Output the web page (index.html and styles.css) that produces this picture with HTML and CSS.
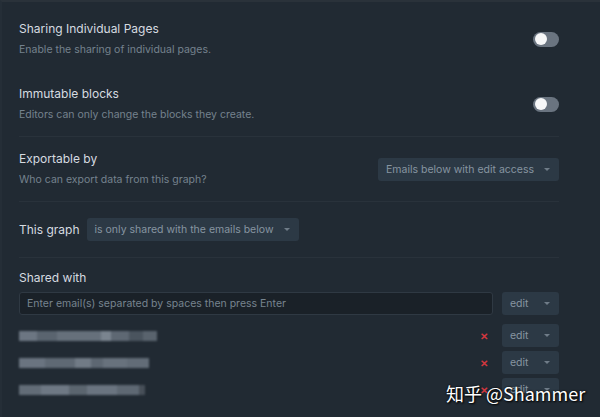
FILE: index.html
```html
<!DOCTYPE html>
<html>
<head>
<meta charset="utf-8">
<link rel="stylesheet" href="styles.css">
</head>
<body>
<div class="panel">
  <div class="row first">
    <div class="text">
      <div class="title">Sharing Individual Pages</div>
      <div class="sub">Enable the sharing of individual pages.</div>
    </div>
    <div class="toggle"><span class="knob"></span></div>
  </div>
  <div class="row">
    <div class="text">
      <div class="title">Immutable blocks</div>
      <div class="sub">Editors can only change the blocks they create.</div>
    </div>
    <div class="toggle"><span class="knob"></span></div>
  </div>
  <div class="row">
    <div class="text">
      <div class="title">Exportable by</div>
      <div class="sub">Who can export data from this graph?</div>
    </div>
    <div class="select wide">Emails below with edit access<span class="caret"></span></div>
  </div>
  <div class="row graph">
    <div class="title">This graph</div>
    <div class="select">is only shared with the emails below<span class="caret"></span></div>
  </div>
  <div class="shared">
    <div class="title">Shared with</div>
    <div class="line">
      <div class="input">Enter email(s) separated by spaces then press Enter</div>
      <div class="select edit">edit<span class="caret"></span></div>
    </div>
    <div class="line">
      <div class="email">
        <i style="width:18px;background:#6c7682"></i><i style="width:20px;background:#5a646f"></i><i style="width:44px;background:#66707b"></i><i style="width:10px;background:#7a848f"></i><i style="width:18px;background:#5e6873"></i><i style="width:14px;background:#4a545e"></i><i style="width:14px;background:#59636d"></i>
      </div>
      <span class="x">✕</span>
      <div class="select edit">edit<span class="caret"></span></div>
    </div>
    <div class="line">
      <div class="email">
        <i style="width:26px;background:#6a7480"></i><i style="width:30px;background:#5f6974"></i><i style="width:16px;background:#717b86"></i><i style="width:12px;background:#5d6772"></i><i style="width:24px;background:#68727d"></i><i style="width:22px;background:#626c77"></i>
      </div>
      <span class="x">✕</span>
      <div class="select edit">edit<span class="caret"></span></div>
    </div>
    <div class="line">
      <div class="email">
        <i style="width:22px;background:#626c77"></i><i style="width:28px;background:#6e7884"></i><i style="width:18px;background:#5b656f"></i><i style="width:30px;background:#6a7480"></i><i style="width:22px;background:#5e6873"></i><i style="width:6px;background:#474f58"></i>
      </div>
      <span class="x">✕</span>
      <div class="select edit">edit<span class="caret"></span></div>
    </div>
  </div>
  <div class="watermark">知乎 @Shammer</div>
</div>
</body>
</html>
```
FILE: styles.css
```css
* { box-sizing: border-box; }
html, body { margin: 0; padding: 0; }
body {
  width: 600px;
  height: 417px;
  overflow: hidden;
  background: #212a33;
  font-family: Inter, "Noto Sans", sans-serif;
}
.panel {
  position: relative;
  height: 417px;
  padding: 7px 41px 0 19px;
  border-top: 2px solid #2a323a;
  border-left: 2px solid #252e37;
}
.row {
  display: flex;
  align-items: center;
  justify-content: space-between;
  padding: 14px 0;
  border-bottom: 1px solid #29323b;
  height: 65px;
}
.row.first { margin-top: -2px; margin-left: -2px; border-bottom-color: transparent; }
.row:not(.first), .shared { margin-left: -2px; }
.text { display: flex; flex-direction: column; gap: 5px; }
.title {
  color: #d6dbe0;
  font-size: 12px;
  line-height: 16px;
}
.sub {
  color: #75828e;
  font-size: 10.5px;
  line-height: 16px;
}
.toggle {
  width: 26px;
  height: 15px;
  border-radius: 8px;
  background: #6a7480;
  padding: 1.5px;
  display: flex;
  align-items: center;
}
.knob {
  width: 12px;
  height: 12px;
  border-radius: 50%;
  background: #f6f7f8;
}
.select {
  display: flex;
  align-items: center;
  justify-content: space-between;
  height: 23px;
  padding: 0 9px 0 8px;
  background: #2c3945;
  border-radius: 3px;
  color: #8795a1;
  font-size: 10.5px;
  white-space: nowrap;
}
.select.wide { width: 181px; }
.caret {
  width: 0; height: 0;
  border-left: 3.5px solid transparent;
  border-right: 3.5px solid transparent;
  border-top: 3.5px solid #6f7c88;
  margin-left: 8px;
}
.row.graph {
  height: 56px;
  justify-content: flex-start;
  gap: 7px;
}
.row.graph .select { width: 212px; }
.shared {
  padding-top: 12px;
  display: flex;
  flex-direction: column;
}
.shared .title { margin-bottom: 6px; }
.line {
  display: flex;
  align-items: center;
  height: 23px;
  margin-bottom: 4px;
}
.line:nth-child(2) { margin-bottom: 9px; }
.input {
  flex: 1;
  height: 23px;
  margin-right: 9px;
  background: #1a2128;
  border: 1px solid #2f3943;
  border-radius: 3px;
  color: #77848f;
  font-size: 10.5px;
  line-height: 21px;
  padding-left: 7px;
}
.select.edit { width: 57px; padding-left: 8px; }
.email {
  display: flex;
  height: 10px;
  filter: blur(0.8px);
}
.email i { display: block; height: 10px; }
.x {
  margin-left: auto;
  margin-right: 14px;
  color: #d3373f;
  font-size: 10px;
  font-weight: bold;
  line-height: 10px;
}
.watermark {
  position: absolute;
  left: 444px;
  top: 377px;
  color: #ffffff;
  font-family: "Noto Sans CJK SC", "Noto Sans", sans-serif;
  font-size: 18px;
  line-height: 28px;
  text-shadow: 0 0 2px #000, 1px 1px 2px #000;
  white-space: nowrap;
}
```
